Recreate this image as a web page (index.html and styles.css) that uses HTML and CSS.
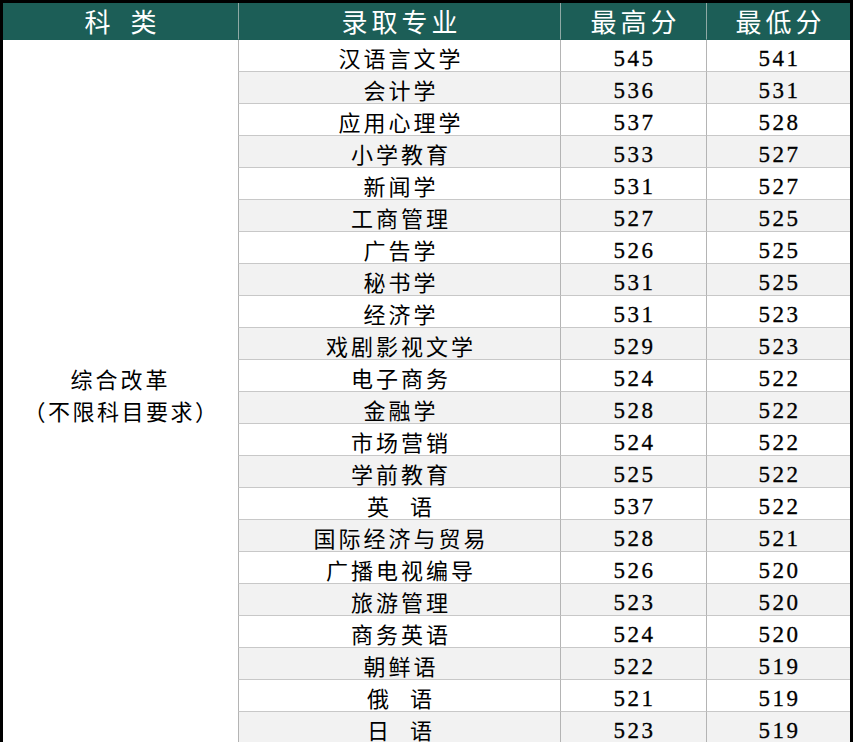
FILE: index.html
```html
<!DOCTYPE html>
<html lang="zh-CN">
<head>
<meta charset="utf-8">
<title>录取分数</title>
<link rel="stylesheet" href="styles.css">
</head>
<body>
<div class="sheet">
  <div class="hd c1">科 类</div>
  <div class="hd">录取专业</div>
  <div class="hd">最高分</div>
  <div class="hd">最低分</div>

  <div class="merged"><div>综合改革</div><div class="paren">（不限科目要求）</div></div>

  <div class="cell zh">汉语言文学</div><div class="cell num">545</div><div class="cell num">541</div>
  <div class="cell zh alt">会计学</div><div class="cell num alt">536</div><div class="cell num alt">531</div>
  <div class="cell zh">应用心理学</div><div class="cell num">537</div><div class="cell num">528</div>
  <div class="cell zh alt">小学教育</div><div class="cell num alt">533</div><div class="cell num alt">527</div>
  <div class="cell zh">新闻学</div><div class="cell num">531</div><div class="cell num">527</div>
  <div class="cell zh alt">工商管理</div><div class="cell num alt">527</div><div class="cell num alt">525</div>
  <div class="cell zh">广告学</div><div class="cell num">526</div><div class="cell num">525</div>
  <div class="cell zh alt">秘书学</div><div class="cell num alt">531</div><div class="cell num alt">525</div>
  <div class="cell zh">经济学</div><div class="cell num">531</div><div class="cell num">523</div>
  <div class="cell zh alt">戏剧影视文学</div><div class="cell num alt">529</div><div class="cell num alt">523</div>
  <div class="cell zh">电子商务</div><div class="cell num">524</div><div class="cell num">522</div>
  <div class="cell zh alt">金融学</div><div class="cell num alt">528</div><div class="cell num alt">522</div>
  <div class="cell zh">市场营销</div><div class="cell num">524</div><div class="cell num">522</div>
  <div class="cell zh alt">学前教育</div><div class="cell num alt">525</div><div class="cell num alt">522</div>
  <div class="cell zh">英 语</div><div class="cell num">537</div><div class="cell num">522</div>
  <div class="cell zh alt">国际经济与贸易</div><div class="cell num alt">528</div><div class="cell num alt">521</div>
  <div class="cell zh">广播电视编导</div><div class="cell num">526</div><div class="cell num">520</div>
  <div class="cell zh alt">旅游管理</div><div class="cell num alt">523</div><div class="cell num alt">520</div>
  <div class="cell zh">商务英语</div><div class="cell num">524</div><div class="cell num">520</div>
  <div class="cell zh alt">朝鲜语</div><div class="cell num alt">522</div><div class="cell num alt">519</div>
  <div class="cell zh">俄 语</div><div class="cell num">521</div><div class="cell num">519</div>
  <div class="cell zh alt">日 语</div><div class="cell num alt">523</div><div class="cell num alt">519</div>
</div>
</body>
</html>
```

FILE: styles.css
```css
html, body {
  margin: 0;
  padding: 0;
  background: #ffffff;
}

.sheet {
  box-sizing: border-box;
  width: 853px;
  border-top: 3px solid #000;
  border-left: 3px solid #000;
  border-right: 3px solid #000;
  display: grid;
  grid-template-columns: 235px 322px 146px 144px;
  grid-template-rows: 37px;
  grid-auto-rows: 32px;
  font-family: "Noto Sans CJK SC", sans-serif;
  color: #000;
}

.hd {
  box-sizing: border-box;
  background: #1c5e57;
  color: #ffffff;
  font-size: 26px;
  letter-spacing: 4px;
  padding-left: 4px;
  border-left: 1px solid #8fa9a5;
  border-bottom: 1px solid #1c5e57;
  display: flex;
  align-items: center;
  justify-content: center;
  line-height: 1;
}

.hd.c1 {
  border-left: none;
  word-spacing: 6px;
}

.merged {
  grid-column: 1;
  grid-row: 2 / span 22;
  display: flex;
  flex-direction: column;
  align-items: center;
  justify-content: center;
  font-size: 22px;
  line-height: 32px;
  letter-spacing: 3px;
  padding-top: 4px;
  background: #fff;
}

.merged .paren {
  letter-spacing: 2.5px;
  padding-left: 2px;
}

.cell {
  box-sizing: border-box;
  border-left: 1px solid #b4b4b4;
  border-bottom: 1px solid #c8c8c8;
  display: flex;
  align-items: center;
  justify-content: center;
  background: #ffffff;
  line-height: 1;
  padding-top: 2px;
}

.cell.alt {
  background: #f2f2f2;
}

.zh {
  font-size: 22px;
  letter-spacing: 3px;
  padding-left: 3px;
  word-spacing: 10px;
}

.num {
  font-family: "Liberation Serif", serif;
  font-size: 23px;
  letter-spacing: 2.5px;
  padding-left: 2px;
  padding-top: 6px;
  -webkit-text-stroke: 0.3px #000;
}
```
